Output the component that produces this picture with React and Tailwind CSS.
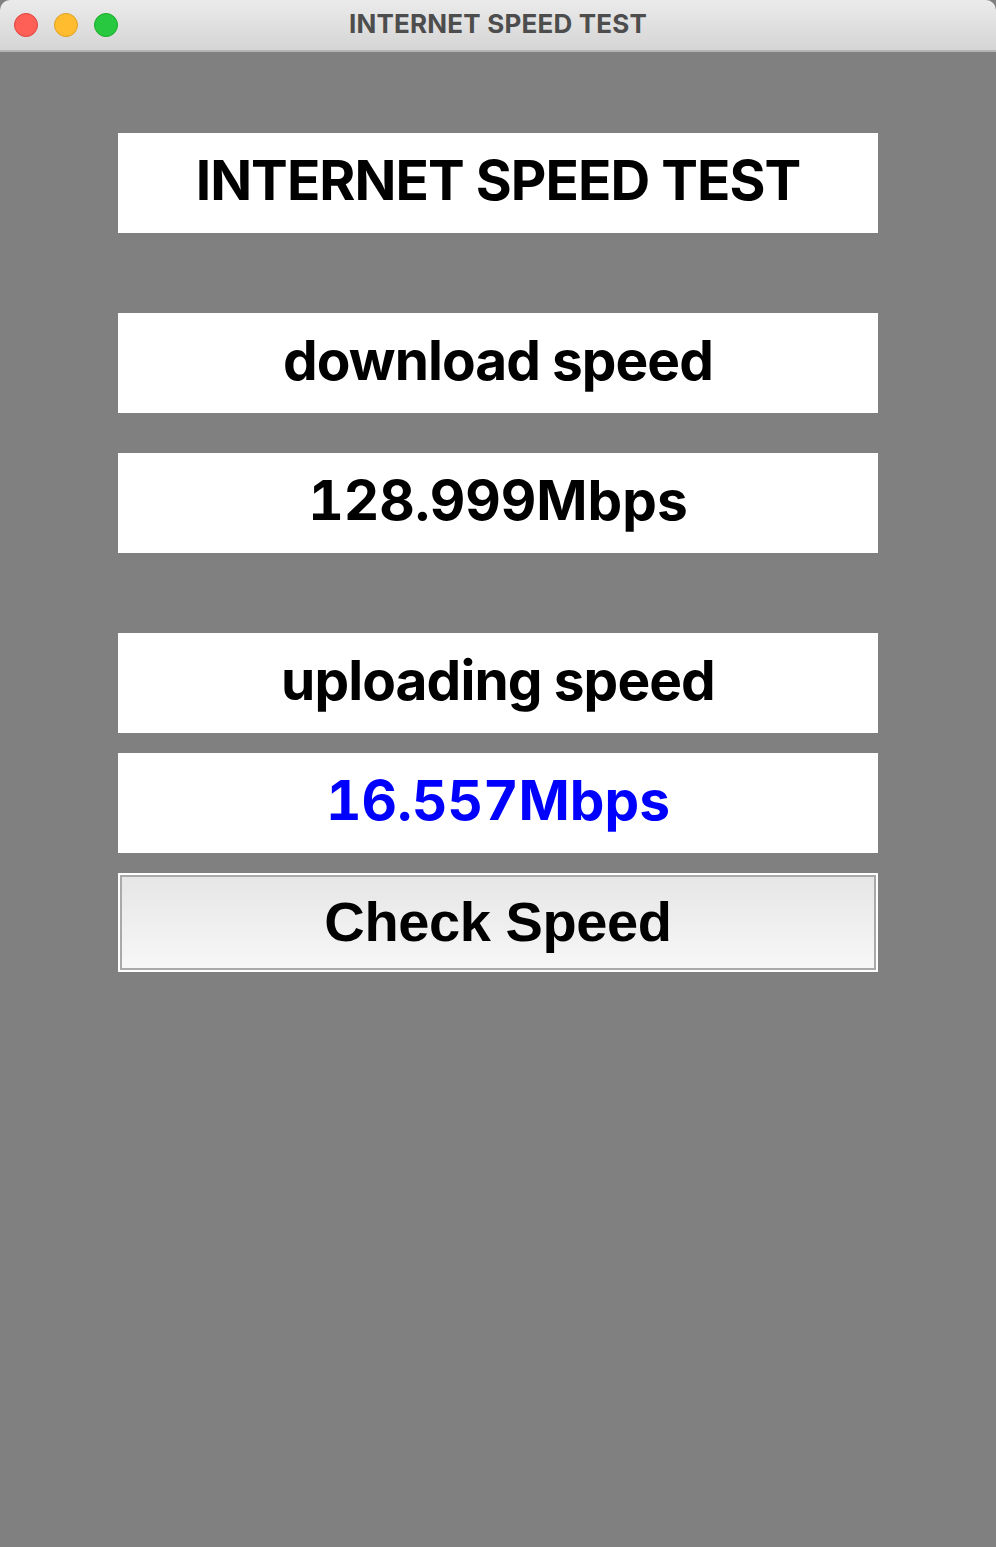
export default function App() {
  return (
    <div className="w-[996px] h-[1547px] flex flex-col bg-[#808080] font-['Inter',sans-serif]">
      {/* window title bar */}
      <div className="relative h-[52px] shrink-0 rounded-t-[10px] bg-gradient-to-b from-[#ebebeb] to-[#d5d5d5] border-b-2 border-[#b4b4b4] flex items-center justify-center pb-[3px]">
        <div className="absolute left-[14px] top-[13px] flex gap-[16px]">
          <span className="w-[24px] h-[24px] rounded-full bg-[#fe5f57] border border-[#e0443e]" />
          <span className="w-[24px] h-[24px] rounded-full bg-[#febc2e] border border-[#dea123]" />
          <span className="w-[24px] h-[24px] rounded-full bg-[#28c840] border border-[#1aab29]" />
        </div>
        <span className="text-[26px] font-bold text-[#4d4d4d] tracking-[0.2px]">INTERNET SPEED TEST</span>
      </div>

      <main className="flex flex-col items-center pt-[81px]">
        <div className="w-[760px] h-[100px] bg-white flex items-center justify-center pb-[5px]">
          <h1 className="text-[55px] font-bold text-black tracking-[-0.95px]">INTERNET SPEED TEST</h1>
        </div>

        <div className="w-[760px] h-[100px] mt-[80px] bg-white flex items-center justify-center pb-[5px]">
          <span className="text-[55px] font-bold text-black tracking-[-0.95px]">download speed</span>
        </div>
        <div className="w-[760px] h-[100px] mt-[40px] bg-white flex items-center justify-center pb-[5px]">
          <span className="text-[55px] font-bold text-black tabular-nums">128.999Mbps</span>
        </div>

        <div className="w-[760px] h-[100px] mt-[80px] bg-white flex items-center justify-center pb-[5px]">
          <span className="text-[55px] font-bold text-black tracking-[-0.9px]">uploading speed</span>
        </div>
        <div className="w-[760px] h-[100px] mt-[20px] bg-white flex items-center justify-center pb-[5px]">
          <span className="text-[55px] font-bold text-[#0000ff] tabular-nums">16.557Mbps</span>
        </div>

        <button className="w-[760px] h-[99px] mt-[20px] border-2 border-white p-0 bg-white">
          <div className="w-full h-full border-2 border-[#a9a9a9] bg-gradient-to-b from-[#e6e6e6] to-[#f7f7f7] flex items-center justify-center pb-[1px]">
            <span className="text-[56px] font-bold text-black font-['Liberation_Sans',sans-serif] tracking-[-0.4px]">Check Speed</span>
          </div>
        </button>
      </main>
    </div>
  );
}
